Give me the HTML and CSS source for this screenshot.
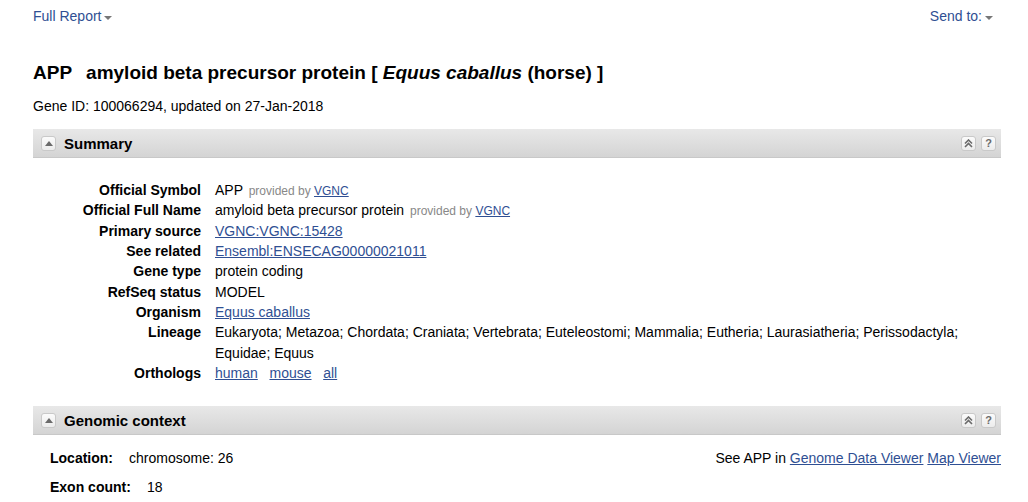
FILE: index.html
```html
<!DOCTYPE html>
<html>
<head>
<meta charset="utf-8">
<link rel="stylesheet" href="styles.css">
</head>
<body>
<div class="page">
  <div class="topbar">
    <a class="menu">Full Report <span class="caret"></span></a>
    <a class="menu">Send to: <span class="caret"></span></a>
  </div>
  <h1 class="title"><span class="sym">APP</span>amyloid beta precursor protein [ <em>Equus caballus</em> (horse) ]</h1>
  <p class="geneid">Gene ID: 100066294, updated on 27-Jan-2018</p>

  <div class="section-bar">
    <div class="bar-left"><span class="toggle"><svg width="8" height="5" viewBox="0 0 8 5"><path d="M0 5 L4 0 L8 5 Z" fill="#6a6a6a"/></svg></span><span class="bar-title">Summary</span></div>
    <div class="bar-right">
      <span class="btn"><svg width="9" height="9" viewBox="0 0 9 9"><path d="M1 4.5 L4.5 1 L8 4.5 M1 8 L4.5 4.5 L8 8" fill="none" stroke="#6a6a6a" stroke-width="1.6"/></svg></span>
      <span class="btn q">?</span>
    </div>
  </div>

  <dl class="summary">
    <dt>Official Symbol</dt><dd>APP <span class="prov">provided by <a>VGNC</a></span></dd>
    <dt>Official Full Name</dt><dd>amyloid beta precursor protein <span class="prov">provided by <a>VGNC</a></span></dd>
    <dt>Primary source</dt><dd><a>VGNC:VGNC:15428</a></dd>
    <dt>See related</dt><dd><a>Ensembl:ENSECAG00000021011</a></dd>
    <dt>Gene type</dt><dd>protein coding</dd>
    <dt>RefSeq status</dt><dd>MODEL</dd>
    <dt>Organism</dt><dd><a>Equus caballus</a></dd>
    <dt>Lineage</dt><dd>Eukaryota; Metazoa; Chordata; Craniata; Vertebrata; Euteleostomi; Mammalia; Eutheria; Laurasiatheria; Perissodactyla; Equidae; Equus</dd>
    <dt>Orthologs</dt><dd><a>human</a>&nbsp;&nbsp; <a>mouse</a>&nbsp;&nbsp; <a>all</a></dd>
  </dl>

  <div class="section-bar second">
    <div class="bar-left"><span class="toggle"><svg width="8" height="5" viewBox="0 0 8 5"><path d="M0 5 L4 0 L8 5 Z" fill="#6a6a6a"/></svg></span><span class="bar-title">Genomic context</span></div>
    <div class="bar-right">
      <span class="btn"><svg width="9" height="9" viewBox="0 0 9 9"><path d="M1 4.5 L4.5 1 L8 4.5 M1 8 L4.5 4.5 L8 8" fill="none" stroke="#6a6a6a" stroke-width="1.6"/></svg></span>
      <span class="btn q">?</span>
    </div>
  </div>

  <div class="context">
    <div class="ctx-row">
      <div><b class="ctx-label">Location:</b>chromosome: 26</div>
      <div>See APP in <a>Genome Data Viewer</a> <a>Map Viewer</a></div>
    </div>
    <div class="ctx-row"><div><b class="ctx-label">Exon count:</b>18</div></div>
  </div>
</div>
</body>
</html>
```

FILE: styles.css
```css
html, body {
  margin: 0;
  padding: 0;
  background: #fff;
}
body {
  font-family: "Liberation Sans", Arial, sans-serif;
  font-size: 14px;
  color: #000;
}
a {
  color: #2f4f93;
  text-decoration: underline;
  cursor: pointer;
}
.page {
  padding: 0 27px 0 33px;
}
.topbar {
  display: flex;
  justify-content: space-between;
  height: 32px;
  align-items: center;
}
.topbar .menu {
  text-decoration: none;
  font-size: 14px;
  color: #2f4f93;
  display: inline-flex;
  align-items: center;
}
.topbar .menu:last-child {
  margin-right: 8px;
}
.caret {
  display: inline-block;
  width: 0;
  height: 0;
  border-left: 4px solid transparent;
  border-right: 4px solid transparent;
  border-top: 4px solid #777;
  margin-left: 3px;
  margin-top: 3px;
}
.title {
  margin: 26px 0 0;
  font-size: 19px;
  font-weight: bold;
  line-height: 30px;
}
.title em {
  font-style: italic;
}
.title .sym {
  margin-right: 14px;
}
.geneid {
  margin: 8px 0 0;
  line-height: 20px;
}
.section-bar {
  margin-top: 13px;
  height: 29px;
  display: flex;
  justify-content: space-between;
  align-items: center;
  background: linear-gradient(#e8e8e8, #d4d4d4);
  border-bottom: 1px solid #c8c8c8;
  box-sizing: border-box;
}
.section-bar.second {
  margin-top: 23px;
}
.bar-left {
  display: flex;
  align-items: center;
}
.toggle, .btn {
  width: 13px;
  height: 13px;
  border: 1px solid #c9c9c9;
  border-radius: 3px;
  background: linear-gradient(#fbfbfb, #ececec);
  display: inline-flex;
  align-items: center;
  justify-content: center;
}
.toggle {
  margin-left: 8px;
}
.bar-title {
  margin-left: 8px;
  font-size: 15px;
  font-weight: bold;
}
.bar-right {
  display: flex;
  gap: 5px;
  margin-right: 5px;
}
.btn.q {
  font-size: 11px;
  font-weight: bold;
  color: #6a6a6a;
  line-height: 1;
}
.summary {
  margin: 22px 35px 0 0;
  display: grid;
  grid-template-columns: 168px 1fr;
  column-gap: 14px;
  line-height: 20.35px;
}
.summary dt {
  font-weight: bold;
  text-align: right;
}
.summary dd {
  margin: 0;
}
.prov {
  font-size: 12px;
  line-height: 12px;
  color: #888;
  margin-left: 2px;
}
.context {
  margin: 13px 0 0 17px;
}
.ctx-row {
  display: flex;
  justify-content: space-between;
  line-height: 20px;
  margin-bottom: 9px;
}
.ctx-label {
  margin-right: 16px;
}
```
